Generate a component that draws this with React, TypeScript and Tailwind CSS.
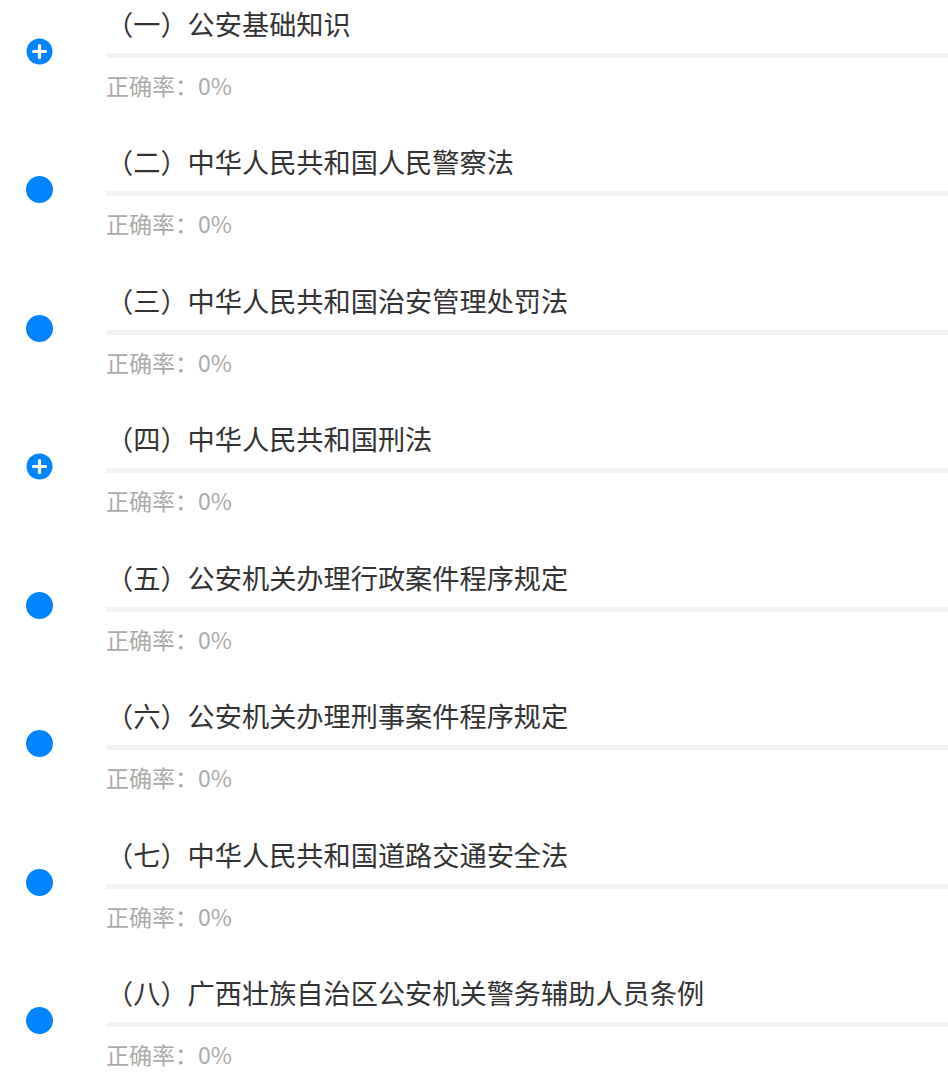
const chapters = [
  { title: '（一）公安基础知识', plus: true },
  { title: '（二）中华人民共和国人民警察法', plus: false },
  { title: '（三）中华人民共和国治安管理处罚法', plus: false },
  { title: '（四）中华人民共和国刑法', plus: true },
  { title: '（五）公安机关办理行政案件程序规定', plus: false },
  { title: '（六）公安机关办理刑事案件程序规定', plus: false },
  { title: '（七）中华人民共和国道路交通安全法', plus: false },
  { title: '（八）广西壮族自治区公安机关警务辅助人员条例', plus: false },
];

function PlusDot() {
  return (
    <svg width="27" height="27" viewBox="0 0 27 27">
      <circle cx="13.5" cy="13.5" r="13" fill="#0084ff" />
      <path d="M13.5 7.5v12M7.5 13.5h12" stroke="#fff" strokeWidth="3.2" strokeLinecap="round" />
    </svg>
  );
}

export default function App() {
  return (
    <div
      className="w-[948px] h-[1080px] overflow-hidden bg-white"
      style={{ fontFamily: '"Noto Sans CJK SC", "Noto Sans", sans-serif' }}
    >
      {chapters.map((c) => (
        <div key={c.title} className="flex h-[138.43px]">
          <div className="w-[106px] shrink-0 pt-[38px] pl-[26px]">
            {c.plus ? (
              <PlusDot />
            ) : (
              <div className="w-[27px] h-[27px] rounded-full bg-[#0084ff]" />
            )}
          </div>
          <div className="flex-1 pt-[5px]">
            <div className="text-[27.2px] leading-[36px] text-[#333333] whitespace-nowrap">{c.title}</div>
            <div className="mt-[12px] h-[5px] rounded-l-full bg-[#f3f3f3]" />
            <div className="mt-[12px] text-[23px] leading-[30px] text-[#ababab]">正确率：0%</div>
          </div>
        </div>
      ))}
    </div>
  );
}
